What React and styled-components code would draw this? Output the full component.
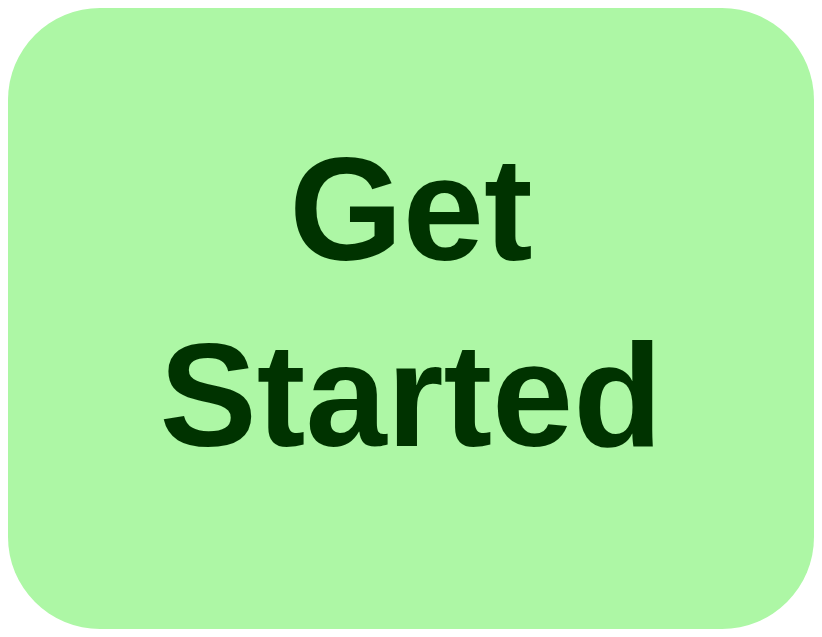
import React from 'react';
import styled, { createGlobalStyle } from 'styled-components';

const GlobalStyle = createGlobalStyle`
  html, body {
    margin: 0;
    background: #ffffff;
  }
  body {
    padding: 8px;
    box-sizing: border-box;
    height: 637px;
  }
  #root {
    height: 100%;
  }
`;

const StartButton = styled.button`
  width: 100%;
  height: 100%;
  display: flex;
  align-items: center;
  justify-content: center;
  padding: 0 0 32px 0;
  border: none;
  border-radius: 92px;
  background: #adf7a5;
  color: #003300;
  font-family: 'Liberation Sans', Arial, sans-serif;
  font-weight: 700;
  font-size: 146px;
  line-height: 186px;
  text-align: center;
  cursor: pointer;
`;

const App = () => (
  <>
    <GlobalStyle />
    <StartButton type="button">
      Get
      <br />
      Started
    </StartButton>
  </>
);

export default App;
